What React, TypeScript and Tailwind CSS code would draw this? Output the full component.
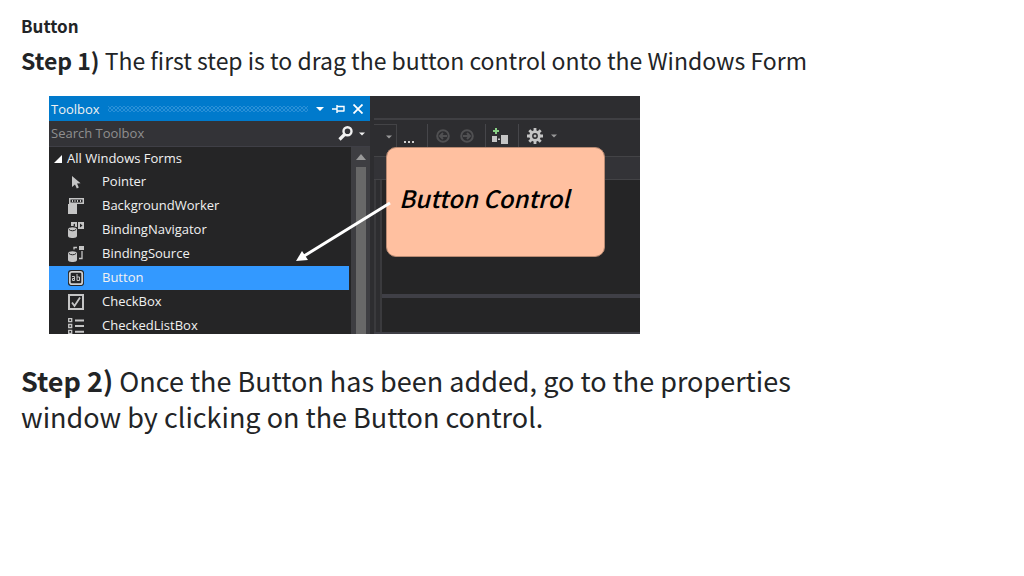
import React, { useState } from "react";

type ToolItem = {
  name: string;
  icon: React.ReactNode;
};

const iconClass = "w-4 h-4 shrink-0";

const PointerIcon = () => (
  <svg viewBox="0 0 16 16" className={iconClass} fill="#c5c5c5">
    <path d="M4 2v11l3-2.6 1.8 4.1 2-.9-1.8-4 3.6-.3z" />
  </svg>
);

const WorkerIcon = () => (
  <svg viewBox="0 0 16 16" className={iconClass} fill="#c5c5c5">
    <path d="M1 0h15v6H9v10H0V6h1z" />
    <path d="M2.500 1.500h12v3h-12z" fill="#252526" />
    <path d="M4 2h1v2H4zM6.500 2h1v2h-1zM9 2h1v2H9zM12 2h1v2h-1z" />
  </svg>
);

const NavigatorIcon = () => (
  <svg viewBox="0 0 16 16" className={iconClass} fill="#c5c5c5">
    <path d="M0 7.500c0-3 9-3 9 0v6.500c0 2.700-9 2.700-9 0z" />
    <path d="M1 7.500c1.500 1.700 5.500 1.700 7 0" fill="none" stroke="#252526" />
    <path d="M3 0h6v5H8L6 4H3zM10 0h6v7h-6z" />
    <path d="M7 1.500v3L5 3zM12 1.500v4L14.500 3.500z" fill="#252526" />
  </svg>
);

const SourceIcon = () => (
  <svg viewBox="0 0 16 16" className={iconClass} fill="#c5c5c5">
    <path d="M0 7.500c0-3 9-3 9 0v6.500c0 2.700-9 2.700-9 0z" />
    <path d="M1 7.500c1.500 1.700 5.500 1.700 7 0" fill="none" stroke="#252526" />
    <path d="M6 3.500V1.500h3M14 5v7.500h-3" fill="none" stroke="#c5c5c5" strokeWidth="1.300" />
    <path d="M11 0h5v4h-5z" />
  </svg>
);

const ButtonIcon = () => (
  <svg viewBox="0 0 16 16" className={iconClass}>
    <rect width="16" height="16" rx="3" fill="#252526" />
    <rect x="1.800" y="1.800" width="12.400" height="12.400" rx="2" fill="none" stroke="#d0d0d0" strokeWidth="1.800" />
    <path d="M4 6.500h2.500v4H4.500v-2h2M9 4v6.500h2.500v-3.500H9" fill="none" stroke="#c5c5c5" />
  </svg>
);

const CheckBoxIcon = () => (
  <svg viewBox="0 0 16 16" className={iconClass} fill="none" stroke="#c5c5c5">
    <path d="M1 1h14v14H1z" strokeWidth="2" />
    <path d="M4 8.500l2.500 3.500L12 3.500" strokeWidth="1.800" />
  </svg>
);

const CheckedListIcon = () => (
  <svg viewBox="0 0 16 16" className={iconClass} fill="none" stroke="#c5c5c5">
    <path d="M.7.700h3v3h-3zM.7 6.500h3v3h-3zM.7 12.300h3v3h-3z" strokeWidth="1.300" />
    <path d="M7 2.500h9M7 8h9M7 13.800h9" strokeWidth="2" />
  </svg>
);

const items: ToolItem[] = [
  { name: "Pointer", icon: <PointerIcon /> },
  { name: "BackgroundWorker", icon: <WorkerIcon /> },
  { name: "BindingNavigator", icon: <NavigatorIcon /> },
  { name: "BindingSource", icon: <SourceIcon /> },
  { name: "Button", icon: <ButtonIcon /> },
  { name: "CheckBox", icon: <CheckBoxIcon /> },
  { name: "CheckedListBox", icon: <CheckedListIcon /> },
];

const Caret = ({ className }: { className: string }) => (
  <svg viewBox="0 0 8 4" className={`h-1 shrink-0 ${className}`} fill="currentColor">
    <path d="M0 0h8L4 4z" />
  </svg>
);

const Toolbox = () => {
  const [selected, setSelected] = useState("Button");

  return (
    <section className="w-[321px] shrink-0 flex flex-col bg-[#252526] text-[#f1f1f1] text-[13px]">
      <header className="h-[25px] shrink-0 bg-[#007acc] flex items-center pl-0.5 pr-[7px] gap-2">
        <h2 className="pt-0.5">Toolbox</h2>
        <div className="flex-1 h-[6px] bg-[radial-gradient(#2a90d8_1px,transparent_1px),radial-gradient(#2a90d8_1px,transparent_1px)] bg-[size:4px_4px] bg-[position:0_0,2px_2px]" />
        <div className="flex items-center gap-2">
          <button aria-label="Window position"><Caret className="w-2 text-white" /></button>
          <button aria-label="Auto hide">
            <svg viewBox="0 0 13 10" className="w-[13px] h-2.5" fill="none" stroke="#fff">
              <path d="M0 5h5M5 1v8M5 2.500h7v5M5 7h7" strokeWidth="1.400" />
            </svg>
          </button>
          <button aria-label="Close">
            <svg viewBox="0 0 10 10" className="w-2.5 h-2.5" stroke="#fff" strokeWidth="1.800">
              <path d="M.5.500l9 9M9.500.500l-9 9" />
            </svg>
          </button>
        </div>
      </header>
      <div className="h-[26px] shrink-0 bg-[#333337] border-b border-[#3f3f46] flex items-center pl-0.5 pr-[5px] gap-1">
        <input
          aria-label="Search Toolbox"
          placeholder="Search Toolbox"
          className="flex-1 min-w-0 bg-transparent outline-none placeholder:text-[#8f8f8f]"
        />
        <button aria-label="Search">
          <svg viewBox="0 0 15 15" className="w-[15px] h-[15px]" fill="none" stroke="#f1f1f1">
            <circle cx="9.500" cy="5.300" r="4" strokeWidth="2.400" />
            <path d="M6.500 8.500l-5 5" strokeWidth="3.200" />
          </svg>
        </button>
        <button aria-label="Search options" className="pl-0.5"><Caret className="w-1.5 text-[#f1f1f1]" /></button>
      </div>
      <div className="flex-1 flex">
        <div className="flex-1">
          <h3 className="h-[23px] flex items-center gap-1 pl-1">
            <svg viewBox="0 0 8 8" className="w-2.5 h-2" fill="#fff"><path d="M8 0v8H0z" /></svg>
            All Windows Forms
          </h3>
          <ul>
            {items.map((item) => (
              <li key={item.name}>
                <button
                  onClick={() => setSelected(item.name)}
                  className={`w-full h-6 flex items-center gap-[18px] pl-[19px] text-left ${selected === item.name ? "bg-[#3399ff]" : ""}`}
                >
                  {item.icon}
                  {item.name}
                </button>
              </li>
            ))}
          </ul>
        </div>
        <div className="w-[21px] bg-[#3e3e42] border-l-2 border-[#252526] flex flex-col items-center pt-[7px]">
          <svg viewBox="0 0 10 6" className="w-2.5 h-1.5" fill="#999"><path d="M5 0l5 6H0z" /></svg>
          <div className="w-2.5 flex-1 mt-[7px] bg-[#686868]" />
        </div>
      </div>
    </section>
  );
};

const NavArrow = ({ label, d }: { label: string; d: string }) => (
  <button aria-label={label}>
    <svg viewBox="0 0 14 14" className="w-3.5 h-3.5" fill="none" stroke="#505052" strokeWidth="2">
      <circle cx="7" cy="7" r="5.800" />
      <path d={d} />
    </svg>
  </button>
);

const Designer = () => (
  <section className="flex-1 min-w-0 flex flex-col bg-[#2d2d30] pl-1">
    <div className="h-6 shrink-0 border-b-2 border-[#3f3f43]" />
    <div className="h-8 shrink-0 mt-1 flex items-stretch text-[#d0d0d0]">
      <div className="w-[23px] border-t border-r border-[#434346] flex items-center justify-end pr-1 pb-2">
        <button aria-label="Component list"><Caret className="w-1.5 text-[#999]" /></button>
      </div>
      <button aria-label="More" className="w-[30px] flex items-center justify-center gap-[2px] pt-1 pr-1.5">
        <span className="size-[2px] bg-[#d0d0d0]" />
        <span className="size-[2px] bg-[#d0d0d0]" />
        <span className="size-[2px] bg-[#d0d0d0]" />
      </button>
      <div className="w-[58px] border-l border-[#46464a] flex items-center gap-2.5 pl-2 pb-2">
        <NavArrow label="Back" d="M11 7H4M7 4L4 7l3 3" />
        <NavArrow label="Forward" d="M3 7h7M7 4l3 3-3 3" />
      </div>
      <div className="w-[33px] border-l border-[#46464a] flex items-center pl-1.5 pb-2">
        <button aria-label="Add component">
          <svg viewBox="0 0 16 16" className="w-4 h-4" fill="#c5c5c5">
            <path d="M3 0h2v2h2v2H5v2H3V4H1V2h2z" fill="#89d185" />
            <path d="M0 8h5v6H0zM6 10.500h2v1.500H6zM9 7h7v9H9z" />
          </svg>
        </button>
      </div>
      <div className="flex-1 border-l border-[#46464a] flex items-center gap-2 pl-2 pb-2">
        <button aria-label="Settings">
          <svg viewBox="0 0 16 16" className="w-4 h-4" fill="none" stroke="#c5c5c5">
            <path
              d="M8 0v4M8 12v4M0 8h4M12 8h4M2.300 2.300l3 3M10.700 10.700l3 3M13.700 2.300l-3 3M5.300 10.700l-3 3"
              strokeWidth="2.800"
            />
            <circle cx="8" cy="8" r="4.300" strokeWidth="2.800" />
            <circle cx="8" cy="8" r="1" fill="#c5c5c5" />
          </svg>
        </button>
        <button aria-label="Settings menu"><Caret className="w-1.5 text-[#999]" /></button>
      </div>
    </div>
    <div className="h-6 shrink-0 bg-[#333337] border-y border-[#434346]" />
    <div className="flex-1 flex bg-[#252526] border-b-2 border-[#3f3f46]">
      <div className="w-2 bg-[#2d2d30] border-x-2 border-[#3a3a3d]" />
      <div className="flex-1 pt-[114px]">
        <div className="h-1 bg-[#3f3f46]" />
      </div>
    </div>
  </section>
);

const App: React.FC = () => {
  return (
    <main className="min-h-screen bg-white pl-[21px] pr-4 pt-3.5 text-[#222426] font-['Noto_Sans_CJK_SC','Noto_Sans',sans-serif]">
      <h1 className="text-[17px] leading-6 font-bold">Button</h1>
      <p className="text-[23px] leading-9 mt-1">
        <strong>Step 1)</strong> The first step is to drag the button control onto the Windows Form
      </p>
      <figure className="relative ml-7 mt-[18px] max-w-[591px] h-[238px] overflow-hidden flex font-['Open_Sans','Noto_Sans',sans-serif]">
        <Toolbox />
        <Designer />
        {/* callout with the arrow pointing at the Button row */}
        <figcaption className="absolute left-[337px] top-[51px] w-[219px] h-[110px] rounded-[10px] border border-[#b98a72] bg-[#ffc0a0] text-black pl-3 pt-[26px] text-[24px] leading-12 font-medium italic whitespace-nowrap font-['Noto_Sans_CJK_SC','Noto_Sans',sans-serif]">
          Button Control
        </figcaption>
        <svg viewBox="0 0 100 64" className="absolute left-[245px] top-[103px] w-[100px] h-16" fill="#fff">
          <path d="M96 4L10 57" stroke="#fff" strokeWidth="3" />
          <path d="M2 62l6-10 6 9z" />
        </svg>
      </figure>
      <p className="max-w-[800px] text-[27px] leading-9 mt-[29px]">
        <strong>Step 2)</strong> Once the Button has been added, go to the properties window by clicking on the Button control.
      </p>
    </main>
  );
};

export default App;
